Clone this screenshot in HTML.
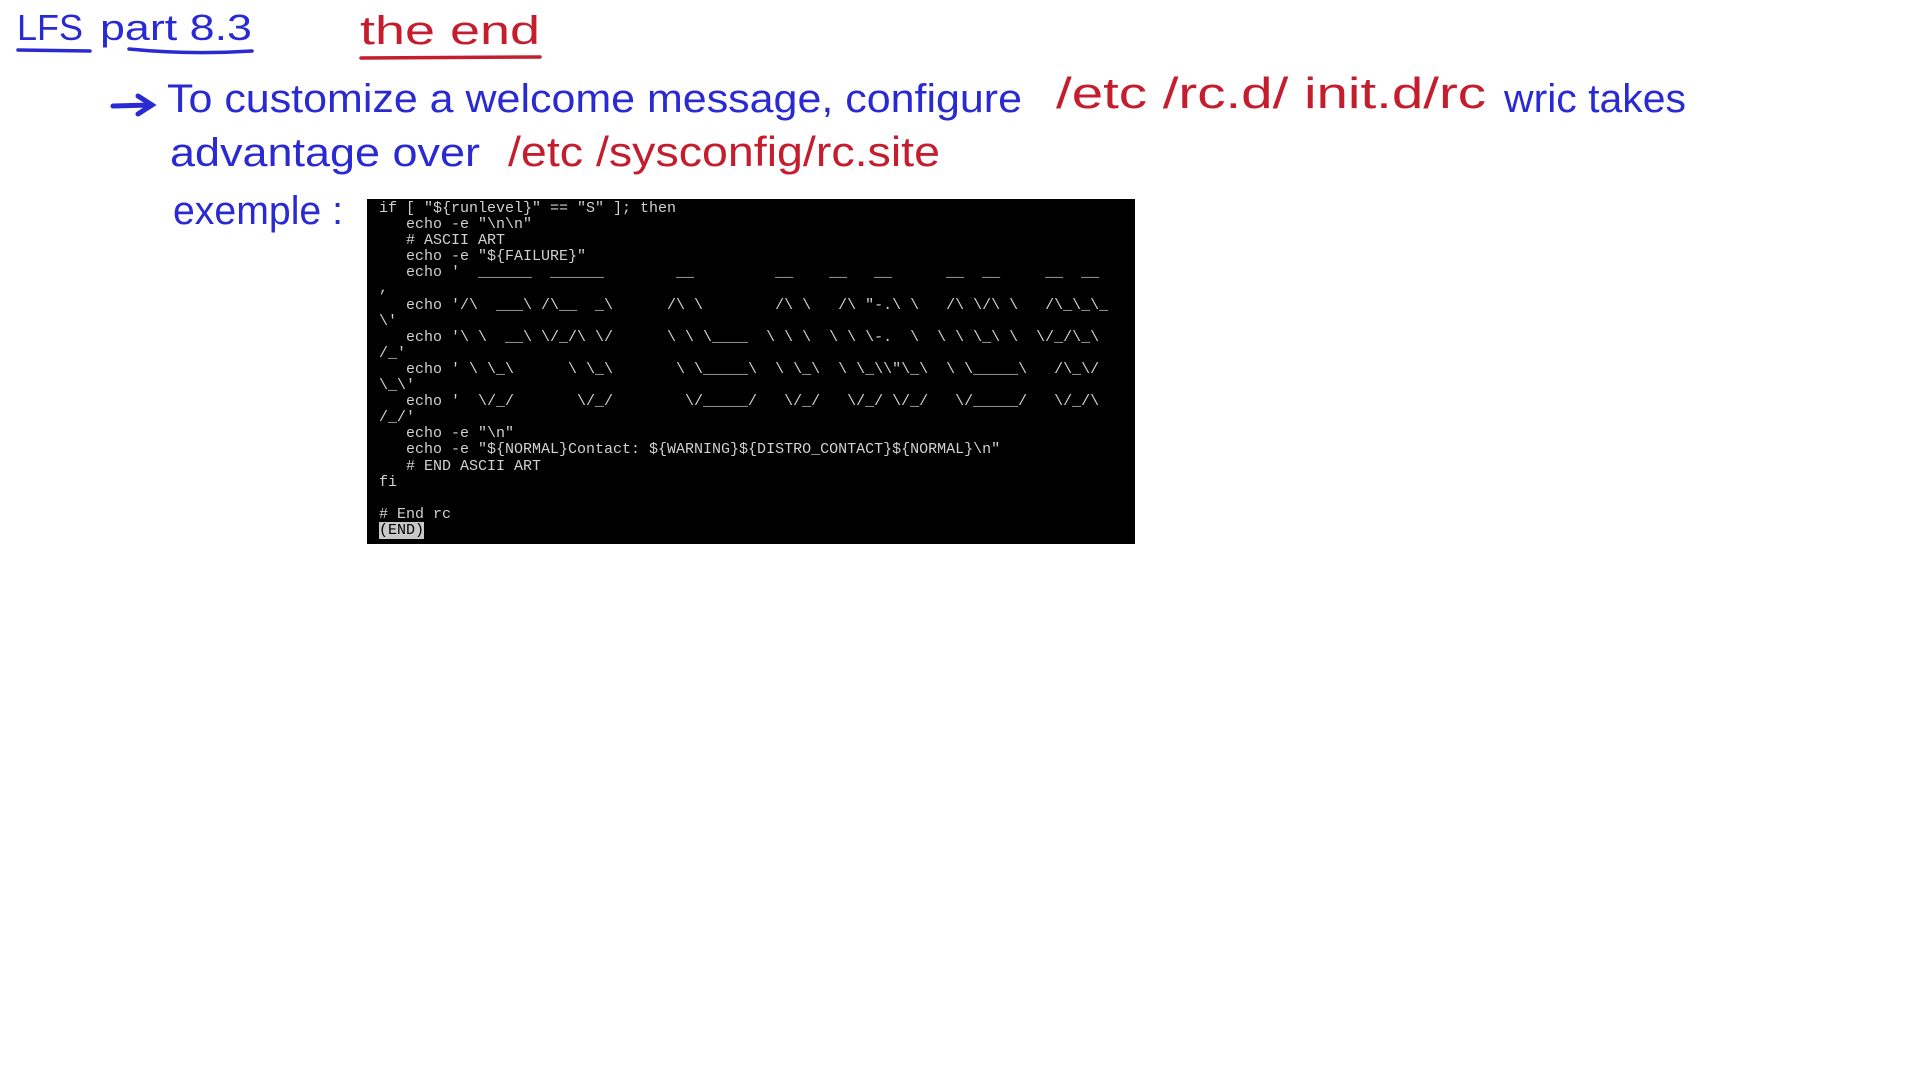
<!DOCTYPE html>
<html><head><meta charset="utf-8"><style>
html,body{margin:0;padding:0;background:#fff;width:1920px;height:1080px;overflow:hidden;position:relative}
svg{position:absolute;left:0;top:0}
.term{position:absolute;left:367px;top:199px;width:768px;height:345px;background:#000}
pre{position:absolute;left:12px;top:2px;margin:0;font-family:"Liberation Mono","DejaVu Sans Mono",monospace;font-size:15px;line-height:16.1px;color:#d0d0d0;white-space:pre}
.end{background:#c8c8c8;color:#000}
</style></head><body>
<svg width="1920" height="1080" xmlns="http://www.w3.org/2000/svg">
<g font-family="Liberation Sans, sans-serif" fill="#2a2ad2">
<text x="17" y="40" font-size="36" textLength="66" lengthAdjust="spacingAndGlyphs">LFS</text>
<text x="100" y="40" font-size="36" textLength="152" lengthAdjust="spacingAndGlyphs">part 8.3</text>
<text x="167" y="112" font-size="40" textLength="855" lengthAdjust="spacingAndGlyphs">To customize a welcome message, configure</text>
<text x="1504" y="112" font-size="40" textLength="182" lengthAdjust="spacingAndGlyphs">wric takes</text>
<text x="170" y="166" font-size="40" textLength="310" lengthAdjust="spacingAndGlyphs">advantage over</text>
<text x="173" y="224" font-size="40" textLength="170" lengthAdjust="spacingAndGlyphs">exemple :</text>
</g>
<g font-family="Liberation Sans, sans-serif" fill="#c41e2e">
<text x="360" y="44" font-size="40" textLength="180" lengthAdjust="spacingAndGlyphs">the end</text>
<text x="1056" y="108" font-size="44" textLength="430" lengthAdjust="spacingAndGlyphs">/etc /rc.d/ init.d/rc</text>
<text x="508" y="166" font-size="42" textLength="432" lengthAdjust="spacingAndGlyphs">/etc /sysconfig/rc.site</text>
</g>
<g stroke-linecap="round" fill="none" stroke-width="3.5">
<path d="M18 50 L90 51" stroke="#2a2ad2"/>
<path d="M129 49 Q190 55 252 51" stroke="#2a2ad2"/>
<path d="M361 58 L540 57" stroke="#c41e2e"/>
<path d="M113 106 L150 105 M138 96 L152 105 L138 114" stroke="#2a2ad2" stroke-width="5"/>
</g>
</svg>
<div class="term"><pre>if [ "${runlevel}" == "S" ]; then
   echo -e "\n\n"
   # ASCII ART
   echo -e "${FAILURE}"
   echo '  ______  ______        __         __    __   __      __  __     __  __
,
   echo '/\  ___\ /\__  _\      /\ \        /\ \   /\ "-.\ \   /\ \/\ \   /\_\_\_
\'
   echo '\ \  __\ \/_/\ \/      \ \ \____  \ \ \  \ \ \-.  \  \ \ \_\ \  \/_/\_\
/_'
   echo ' \ \_\      \ \_\       \ \_____\  \ \_\  \ \_\\"\_\  \ \_____\   /\_\/
\_\'
   echo '  \/_/       \/_/        \/_____/   \/_/   \/_/ \/_/   \/_____/   \/_/\
/_/'
   echo -e "\n"
   echo -e "${NORMAL}Contact: ${WARNING}${DISTRO_CONTACT}${NORMAL}\n"
   # END ASCII ART
fi

# End rc
<span class="end">(END)</span></pre></div>
</body></html>
